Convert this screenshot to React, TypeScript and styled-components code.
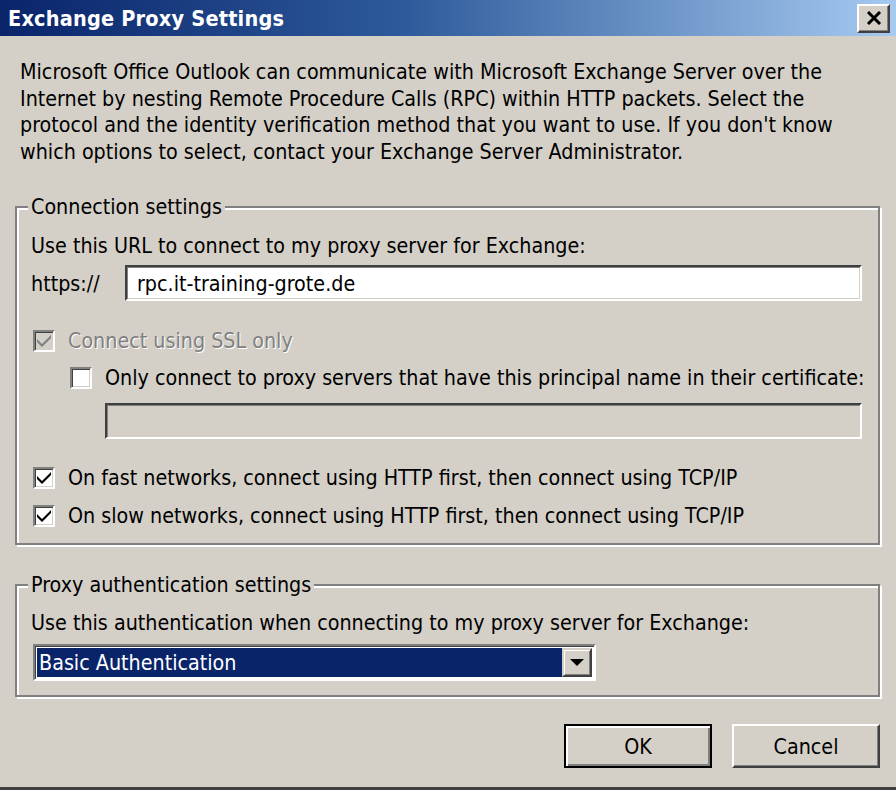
import styled, { createGlobalStyle } from "styled-components";

const GlobalStyle = createGlobalStyle`
  html, body {
    margin: 0;
    padding: 0;
    background: #d4d0c8;
  }
  * {
    box-sizing: border-box;
  }
`;

const Window = styled.div`
  width: 896px;
  height: 790px;
  display: flex;
  flex-direction: column;
  background: #d4d0c8;
  font-family: "DejaVu Sans Condensed", "DejaVu Sans", sans-serif;
  font-size: 21.3px;
  color: #000;
  overflow: hidden;
  border-bottom: 3px solid #404040;
`;

const TitleBar = styled.div`
  height: 36px;
  flex: none;
  display: flex;
  align-items: center;
  justify-content: space-between;
  padding: 0 6px 0 8px;
  background: linear-gradient(to right, #0a246a 0%, #2d5a9a 45%, #a6caf0 100%);
`;

const Title = styled.div`
  color: #fff;
  font-weight: bold;
  font-size: 21.5px;
  letter-spacing: 0.2px;
`;

const CloseButton = styled.div`
  width: 33px;
  height: 29px;
  display: flex;
  align-items: center;
  justify-content: center;
  background: #d4d0c8;
  border: 2px solid;
  border-color: #fff #404040 #404040 #fff;
  box-shadow: inset -1px -1px 0 #808080;
`;

const Body = styled.div`
  display: flex;
  flex-direction: column;
  padding: 23px 16px 0 15px;
`;

const Intro = styled.p`
  margin: 0 0 29px 5px;
  line-height: 26.5px;
  white-space: nowrap;
`;

const Group = styled.fieldset<{ $gap?: number }>`
  margin: 0 0 ${(p) => p.$gap ?? 0}px 0;
  padding: 0 16px 14px 14px;
  border: 2px solid #808080;
  box-shadow: 2px 2px 0 #fff, inset 2px 2px 0 #fff;
  display: flex;
  flex-direction: column;
  min-width: 0;
`;

const Legend = styled.legend`
  margin-left: -3px;
  padding: 0 3px;
  line-height: 26px;
  background: #d4d0c8;
`;

const Line = styled.div<{ $mt?: number; $indent?: number; $disabled?: boolean }>`
  margin-top: ${(p) => p.$mt ?? 0}px;
  margin-left: ${(p) => p.$indent ?? 0}px;
  line-height: 26px;
  display: flex;
  align-items: center;
  color: ${(p) => (p.$disabled ? "#808080" : "#000")};
  text-shadow: ${(p) => (p.$disabled ? "1px 1px 0 #fff" : "none")};
  white-space: nowrap;
`;

const UrlRow = styled.div`
  margin-top: 6px;
  display: flex;
  align-items: center;
`;

const Prefix = styled.span`
  width: 94px;
  flex: none;
`;

const TextBox = styled.div<{ $disabled?: boolean; $mt?: number; $indent?: number }>`
  flex: 1 0 auto;
  height: 36px;
  margin-top: ${(p) => p.$mt ?? 0}px;
  margin-left: ${(p) => p.$indent ?? 0}px;
  padding-left: 10px;
  display: flex;
  align-items: center;
  background: ${(p) => (p.$disabled ? "#d4d0c8" : "#fff")};
  border: 2px solid;
  border-color: #404040 #fff #fff #404040;
  box-shadow: inset 1px 1px 0 #808080, inset -1px -1px 0 #d4d0c8;
`;

const Box = styled.span<{ $disabled?: boolean }>`
  width: 22px;
  height: 22px;
  flex: none;
  margin: 0 13px 0 2px;
  display: flex;
  align-items: center;
  justify-content: center;
  background: ${(p) => (p.$disabled ? "#d4d0c8" : "#fff")};
  border: 2px solid;
  border-color: #808080 #fff #fff #808080;
  box-shadow: inset 1px 1px 0 #404040, inset -1px -1px 0 #d4d0c8;
`;

const Select = styled.div`
  width: 563px;
  height: 37px;
  margin: 8px 0 0 2px;
  display: flex;
  border: 2px solid;
  border-color: #808080 #fff #fff #808080;
  box-shadow: inset 1px 1px 0 #404040;
  padding: 2px;
  background: #fff;
`;

const SelectValue = styled.div`
  flex: 1;
  display: flex;
  align-items: center;
  padding-left: 2px;
  background: #0a246a;
  color: #fff;
`;

const DropButton = styled.div`
  width: 30px;
  flex: none;
  display: flex;
  align-items: center;
  justify-content: center;
  background: #d4d0c8;
  border: 2px solid;
  border-color: #d4d0c8 #404040 #404040 #d4d0c8;
  box-shadow: inset 1px 1px 0 #fff, inset -1px -1px 0 #808080;
`;

const ButtonRow = styled.div`
  margin-top: 27px;
  display: flex;
  justify-content: flex-end;
  gap: 20px;
`;

const Button = styled.div<{ $default?: boolean }>`
  width: 148px;
  height: 44px;
  display: flex;
  align-items: center;
  justify-content: center;
  background: #d4d0c8;
  border: 2px solid;
  border-color: ${(p) => (p.$default ? "#000" : "#fff #404040 #404040 #fff")};
  box-shadow: ${(p) =>
    p.$default
      ? "inset 2px 2px 0 #fff, inset -2px -2px 0 #808080"
      : "inset -1px -1px 0 #808080"};
`;

const Check = ({ color = "#000" }: { color?: string }) => (
  <svg width="14" height="14" viewBox="0 0 7 7">
    <path d="M0 2.5 L2.5 5 L7 0.5 L7 2 L2.5 6.5 L0 4 Z" fill={color} />
  </svg>
);

function CheckBox({ checked, disabled }: { checked?: boolean; disabled?: boolean }) {
  return (
    <Box $disabled={disabled}>
      {checked && <Check color={disabled ? "#808080" : "#000"} />}
    </Box>
  );
}

export default function App() {
  return (
    <>
      <GlobalStyle />
      <Window>
        <TitleBar>
          <Title>Exchange Proxy Settings</Title>
          <CloseButton>
            <svg width="16" height="14" viewBox="0 0 16 14">
              <path d="M2 1 L14 13 M14 1 L2 13" stroke="#000" strokeWidth="3" />
            </svg>
          </CloseButton>
        </TitleBar>
        <Body>
          <Intro>
            Microsoft Office Outlook can communicate with Microsoft Exchange Server over the
            <br />
            Internet by nesting Remote Procedure Calls (RPC) within HTTP packets. Select the
            <br />
            protocol and the identity verification method that you want to use. If you don't know
            <br />
            which options to select, contact your Exchange Server Administrator.
          </Intro>

          <Group $gap={27}>
            <Legend>Connection settings</Legend>
            <Line $mt={13}>Use this URL to connect to my proxy server for Exchange:</Line>
            <UrlRow>
              <Prefix>https://</Prefix>
              <TextBox>rpc.it-training-grote.de</TextBox>
            </UrlRow>
            <Line $mt={27} $disabled>
              <CheckBox checked disabled />
              Connect using SSL only
            </Line>
            <Line $mt={11} $indent={37}>
              <CheckBox />
              Only connect to proxy servers that have this principal name in their certificate:
            </Line>
            <TextBox $disabled $mt={12} $indent={74} />
            <Line $mt={26}>
              <CheckBox checked />
              On fast networks, connect using HTTP first, then connect using TCP/IP
            </Line>
            <Line $mt={12}>
              <CheckBox checked />
              On slow networks, connect using HTTP first, then connect using TCP/IP
            </Line>
          </Group>

          <Group>
            <Legend>Proxy authentication settings</Legend>
            <Line $mt={12}>Use this authentication when connecting to my proxy server for Exchange:</Line>
            <Select>
              <SelectValue>Basic Authentication</SelectValue>
              <DropButton>
                <svg width="14" height="8" viewBox="0 0 14 8">
                  <path d="M0 0 H14 L7 7 Z" fill="#000" />
                </svg>
              </DropButton>
            </Select>
          </Group>

          <ButtonRow>
            <Button $default>OK</Button>
            <Button>Cancel</Button>
          </ButtonRow>
        </Body>
      </Window>
    </>
  );
}
